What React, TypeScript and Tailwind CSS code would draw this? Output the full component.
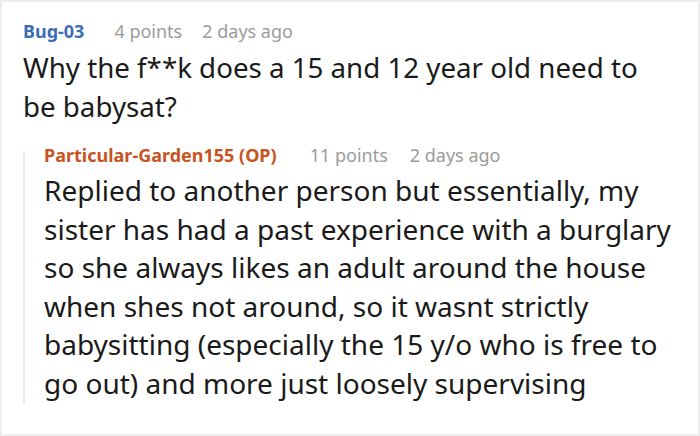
export default function App() {
  return (
    <div className="w-[700px] h-[436px] bg-white border-2 border-[#ededed] overflow-hidden" style={{ fontFamily: '"Noto Sans", "Open Sans", sans-serif' }}>
      <div className="pl-[21px] pt-[17px]">
        <div className="flex items-baseline text-[18px] leading-[24px]">
          <span className="font-bold text-[#3b6db5]">Bug-03</span>
          <span className="ml-[30px] text-[#9b9b9b]">4 points</span>
          <span className="ml-[20px] text-[#9b9b9b]">2 days ago</span>
        </div>
        <p className="text-[27.7px] leading-[39px] text-[#1a1a1a] mt-[5px]">
          Why the f**k does a 15 and 12 year old need to
          <br />
          be babysat?
        </p>
        <div className="mt-[17px] pl-[21px] relative">
          <div className="absolute left-0 top-[8px] bottom-[-2px] w-[2px] bg-[#ececec]" />
          <div className="flex items-baseline text-[18px] leading-[24px]">
            <span className="font-bold text-[#c9541f]">Particular-Garden155 (OP)</span>
            <span className="ml-[33px] text-[#9b9b9b]">11 points</span>
            <span className="ml-[22px] text-[#9b9b9b]">2 days ago</span>
          </div>
          <p className="text-[28px] leading-[38.6px] text-[#1a1a1a] mt-[4px] whitespace-nowrap">
            Replied to another person but essentially, my
            <br />
            sister has had a past experience with a burglary
            <br />
            so she always likes an adult around the house
            <br />
            when shes not around, so it wasnt strictly
            <br />
            babysitting (especially the 15 y/o who is free to
            <br />
            go out) and more just loosely supervising
          </p>
        </div>
      </div>
    </div>
  );
}
